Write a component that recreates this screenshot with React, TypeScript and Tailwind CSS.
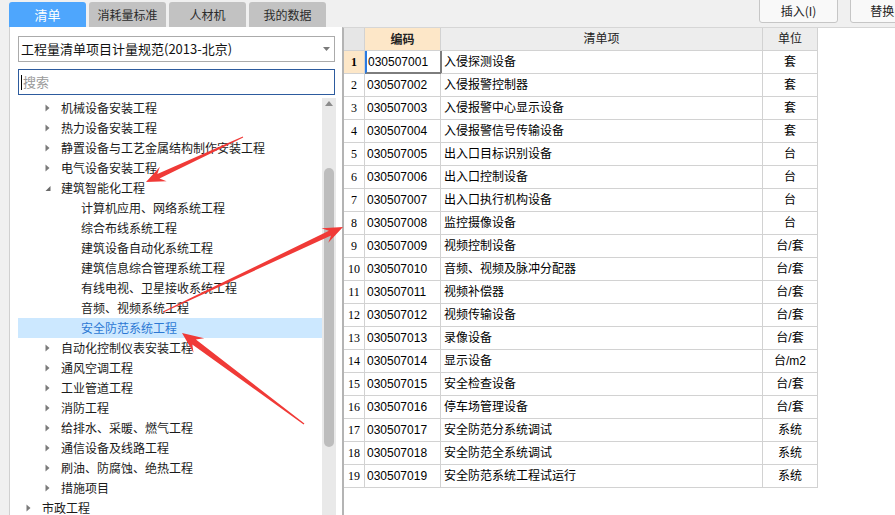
import React from 'react';

const rows: [string, string, string][] = [
  ['030507001', '入侵探测设备', '套'],
  ['030507002', '入侵报警控制器', '套'],
  ['030507003', '入侵报警中心显示设备', '套'],
  ['030507004', '入侵报警信号传输设备', '套'],
  ['030507005', '出入口目标识别设备', '台'],
  ['030507006', '出入口控制设备', '台'],
  ['030507007', '出入口执行机构设备', '台'],
  ['030507008', '监控摄像设备', '台'],
  ['030507009', '视频控制设备', '台/套'],
  ['030507010', '音频、视频及脉冲分配器', '台/套'],
  ['030507011', '视频补偿器', '台/套'],
  ['030507012', '视频传输设备', '台/套'],
  ['030507013', '录像设备', '台/套'],
  ['030507014', '显示设备', '台/m2'],
  ['030507015', '安全检查设备', '台/套'],
  ['030507016', '停车场管理设备', '台/套'],
  ['030507017', '安全防范分系统调试', '系统'],
  ['030507018', '安全防范全系统调试', '系统'],
  ['030507019', '安全防范系统工程试运行', '系统'],
];

type TreeItem = { level: 0 | 1 | 2; text: string; state?: 'collapsed' | 'expanded'; selected?: boolean };

const tree: TreeItem[] = [
  { level: 1, text: '机械设备安装工程', state: 'collapsed' },
  { level: 1, text: '热力设备安装工程', state: 'collapsed' },
  { level: 1, text: '静置设备与工艺金属结构制作安装工程', state: 'collapsed' },
  { level: 1, text: '电气设备安装工程', state: 'collapsed' },
  { level: 1, text: '建筑智能化工程', state: 'expanded' },
  { level: 2, text: '计算机应用、网络系统工程' },
  { level: 2, text: '综合布线系统工程' },
  { level: 2, text: '建筑设备自动化系统工程' },
  { level: 2, text: '建筑信息综合管理系统工程' },
  { level: 2, text: '有线电视、卫星接收系统工程' },
  { level: 2, text: '音频、视频系统工程' },
  { level: 2, text: '安全防范系统工程', selected: true },
  { level: 1, text: '自动化控制仪表安装工程', state: 'collapsed' },
  { level: 1, text: '通风空调工程', state: 'collapsed' },
  { level: 1, text: '工业管道工程', state: 'collapsed' },
  { level: 1, text: '消防工程', state: 'collapsed' },
  { level: 1, text: '给排水、采暖、燃气工程', state: 'collapsed' },
  { level: 1, text: '通信设备及线路工程', state: 'collapsed' },
  { level: 1, text: '刷油、防腐蚀、绝热工程', state: 'collapsed' },
  { level: 1, text: '措施项目', state: 'collapsed' },
  { level: 0, text: '市政工程', state: 'collapsed' },
];

function Collapsed() {
  return (
    <svg width="6" height="8" viewBox="0 0 6 8" className="shrink-0">
      <path d="M0.5 0.5 L4.5 4 L0.5 7.5 Z" fill="#7a7a7a" />
    </svg>
  );
}

function Expanded() {
  return (
    <svg width="6" height="8" viewBox="0 0 6 8" className="shrink-0">
      <path d="M5.5 2 L5.5 7 L0.5 7 Z" fill="#6a6a6a" />
    </svg>
  );
}

function arrowPoints(
  tx: number, ty: number, px: number, py: number,
  headLen: number, headHalf: number, neckHalf: number, tailHalf: number
) {
  const dx = px - tx;
  const dy = py - ty;
  const len = Math.hypot(dx, dy);
  const ux = dx / len;
  const uy = dy / len;
  const nx = -uy;
  const ny = ux;
  const nkx = px - ux * headLen * 0.72;
  const nky = py - uy * headLen * 0.72;
  const bx = px - ux * headLen;
  const by = py - uy * headLen;
  const pts = [
    [tx + nx * tailHalf, ty + ny * tailHalf],
    [nkx + nx * neckHalf, nky + ny * neckHalf],
    [bx + nx * headHalf, by + ny * headHalf],
    [px, py],
    [bx - nx * headHalf, by - ny * headHalf],
    [nkx - nx * neckHalf, nky - ny * neckHalf],
    [tx - nx * tailHalf, ty - ny * tailHalf],
  ];
  return pts.map((p) => `${p[0].toFixed(1)},${p[1].toFixed(1)}`).join(' ');
}

function Arrows() {
  return (
    <svg className="absolute left-0 top-0 pointer-events-none" width="895" height="515" viewBox="0 0 895 515">
      <polygon points={arrowPoints(243, 137, 146, 182, 19, 8, 2.6, 0.5)} fill="#f03a37" />
      <polygon points={arrowPoints(163, 312, 343, 227, 20, 8, 2.6, 0.5)} fill="#f03a37" />
      <polygon points={arrowPoints(304, 424, 182, 333, 21, 9, 3, 0.6)} fill="#f03a37" />
    </svg>
  );
}

export default function App() {
  return (
    <div className="relative w-[895px] h-[515px] overflow-hidden bg-[#f0f0f0] flex flex-col font-['Noto_Sans_CJK_SC',sans-serif] text-[#1a1a1a]">
      {/* top bar */}
      <div className="h-[27px] shrink-0 flex">
        <div className="flex gap-[3px] pl-[9px] pt-[2px]">
          <div className="w-[77px] h-[25px] rounded-t-[3px] bg-[#4ea6fd] text-white text-[13px] flex items-center justify-center">清单</div>
          <div className="w-[77px] h-[25px] rounded-t-[3px] bg-[#c2c2c2] text-[#2b2b2b] text-[12px] flex items-center justify-center">消耗量标准</div>
          <div className="w-[77px] h-[25px] rounded-t-[3px] bg-[#c2c2c2] text-[#2b2b2b] text-[12px] flex items-center justify-center">人材机</div>
          <div className="w-[77px] h-[25px] rounded-t-[3px] bg-[#c2c2c2] text-[#2b2b2b] text-[12px] flex items-center justify-center">我的数据</div>
        </div>
        <div className="flex gap-[12px] ml-[433px] shrink-0">
          <div className="w-[79px] h-[24px] -mt-[1px] border border-[#c6c6c6] rounded-b-[3px] bg-[#f9f9f9] text-[12px] text-[#222] flex items-center justify-center">插入(I)</div>
          <div className="w-[80px] h-[24px] -mt-[1px] border border-[#c6c6c6] rounded-b-[3px] bg-[#f9f9f9] text-[12px] text-[#222] flex items-center justify-center shrink-0">替换(R)</div>
        </div>
      </div>

      {/* body */}
      <div className="flex flex-1 min-h-0">
        <div className="w-[9px] shrink-0" />
        {/* left panel */}
        <div className="w-[333px] shrink-0 bg-white border-l border-[#d0d0d0] flex flex-col pl-[8px] pt-[9px]">
          <div className="w-[317px] h-[26px] border border-[#ababab] flex items-center justify-between pl-[2px] pr-[4px] text-[13px] text-[#111]">
            <span>工程量清单项目计量规范(2013-北京)</span>
            <svg width="7" height="4" viewBox="0 0 7 4"><path d="M0 0 L7 0 L3.5 4 Z" fill="#7a7a7a" /></svg>
          </div>
          <div className="mt-[7px] w-[317px] h-[26px] border border-[#2d5b9e] flex items-center pl-[2px] text-[13px] text-[#9a9a9a]">
            <span className="w-px h-[15px] bg-black mr-px" />
            <span>搜索</span>
          </div>
          <div className="mt-[3px] flex flex-1 min-h-0">
            <div className="w-[304px] shrink-0 flex flex-col overflow-hidden">
              {tree.map((it, i) => {
                const pl = it.level === 0 ? 'pl-[8px]' : it.level === 1 ? 'pl-[27px]' : 'pl-[63px]';
                return (
                  <div
                    key={i}
                    className={`h-[20px] shrink-0 flex items-center text-[12px] ${pl} ${it.selected ? 'bg-[#cce8ff] text-[#2c78d4]' : ''}`}
                  >
                    {it.state && (
                      <span className="w-[16px] shrink-0 flex items-center">
                        {it.state === 'collapsed' ? <Collapsed /> : <Expanded />}
                      </span>
                    )}
                    <span className="whitespace-nowrap">{it.text}</span>
                  </div>
                );
              })}
            </div>
            <div className="w-[14px] shrink-0 bg-[#e9e9e9] flex flex-col items-center">
              <svg width="8" height="5" viewBox="0 0 8 5" className="mt-[3px]"><path d="M0 5 L8 5 L4 0 Z" fill="#8c8c8c" /></svg>
              <div className="mt-[62px] w-[10px] h-[279px] rounded-full bg-[#bdbdbd]" />
            </div>
          </div>
        </div>

        {/* grid */}
        <div className="flex-1 bg-white border-l-2 border-l-[#b4b4b4] border-t border-t-[#d6d6d6] font-['Liberation_Sans','Noto_Sans_CJK_SC',sans-serif] text-[12px] text-black">
          <div className="grid grid-cols-[21px_76px_322px_55px] auto-rows-[23px] w-[474px]">
            <div className="bg-[#e6e6e6] border-r border-b border-[#d2d2d2]" />
            <div className="bg-[#fde7c8] border-r border-b border-[#d2d2d2] flex items-center justify-center font-bold font-['Noto_Sans_CJK_SC',sans-serif] text-[#222]">编码</div>
            <div className="bg-[#ededed] border-r border-b border-[#d2d2d2] flex items-center justify-center text-[#222]">清单项</div>
            <div className="bg-[#ededed] border-r border-b border-[#d2d2d2] flex items-center justify-center text-[#222]">单位</div>
            {rows.map((r, i) => (
              <React.Fragment key={r[0]}>
                <div
                  className={`border-r border-b border-[#d2d2d2] flex items-center justify-center font-['Liberation_Serif',serif] text-[12px] ${i === 0 ? 'bg-[#fde7c8] font-bold' : 'bg-white'}`}
                >
                  {i + 1}
                </div>
                {i === 0 ? (
                  <div className="border-l-2 border-l-[#2a7ae2] border-r-2 border-r-[#7d7d7d] border-b-2 border-b-[#7d7d7d] flex items-center pl-[1px] -mr-px">
                    {r[0]}
                  </div>
                ) : (
                  <div className="border-r border-b border-[#d2d2d2] flex items-center pl-[2px]">{r[0]}</div>
                )}
                <div className="border-r border-b border-[#d2d2d2] flex items-center pl-[3px]">{r[1]}</div>
                <div className="border-r border-b border-[#d2d2d2] flex items-center justify-center">{r[2]}</div>
              </React.Fragment>
            ))}
          </div>
        </div>
      </div>

      <Arrows />
    </div>
  );
}
